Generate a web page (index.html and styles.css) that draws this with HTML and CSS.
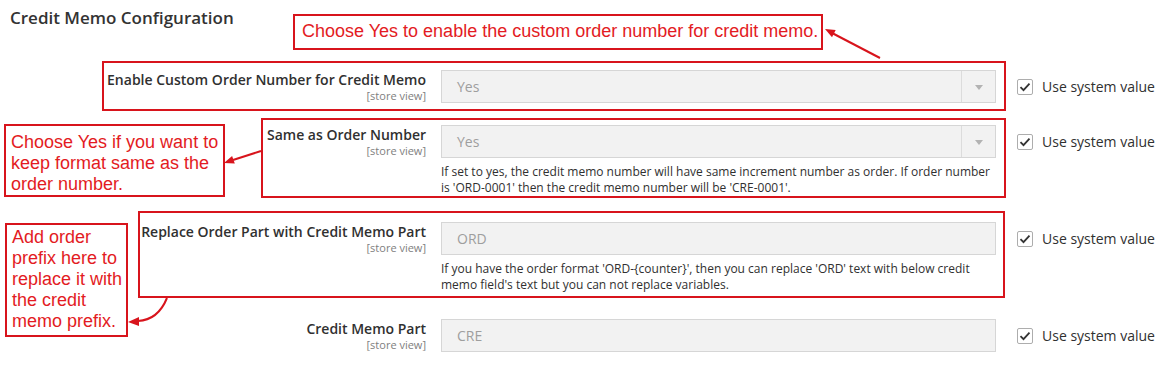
FILE: index.html
```html
<!DOCTYPE html>
<html lang="en">
<head>
    <meta charset="UTF-8">
    <meta name="viewport" content="width=device-width, initial-scale=1.0">
    <title>Credit Memo Configuration</title>
    <link rel="stylesheet" href="styles.css">
</head>
<body>
    <div class="page">
        <h2 class="title">Credit Memo Configuration</h2>

        <div class="form">
            <div class="row">
                <div class="label">
                    <span class="name">Enable Custom Order Number for Credit Memo</span>
                    <span class="scope">[store view]</span>
                </div>
                <div class="value">
                    <div class="field select"><span>Yes</span><span class="caret"></span></div>
                </div>
                <label class="inherit">
                    <span class="check"><svg viewBox="0 0 16 16" width="16" height="16"><path d="M3.5 8.2l3 3 6-6.5" fill="none" stroke="#333" stroke-width="1.8"/></svg></span>
                    Use system value
                </label>
            </div>

            <div class="row">
                <div class="label">
                    <span class="name">Same as Order Number</span>
                    <span class="scope">[store view]</span>
                </div>
                <div class="value">
                    <div class="field select"><span>Yes</span><span class="caret"></span></div>
                    <p class="note">If set to yes, the credit memo number will have same increment number as order. If order number is 'ORD-0001' then the credit memo number will be 'CRE-0001'.</p>
                </div>
                <label class="inherit">
                    <span class="check"><svg viewBox="0 0 16 16" width="16" height="16"><path d="M3.5 8.2l3 3 6-6.5" fill="none" stroke="#333" stroke-width="1.8"/></svg></span>
                    Use system value
                </label>
            </div>

            <div class="row">
                <div class="label">
                    <span class="name">Replace Order Part with Credit Memo Part</span>
                    <span class="scope">[store view]</span>
                </div>
                <div class="value">
                    <div class="field"><span>ORD</span></div>
                    <p class="note">If you have the order format 'ORD-{counter}', then you can replace 'ORD' text with below credit memo field's text but you can not replace variables.</p>
                </div>
                <label class="inherit">
                    <span class="check"><svg viewBox="0 0 16 16" width="16" height="16"><path d="M3.5 8.2l3 3 6-6.5" fill="none" stroke="#333" stroke-width="1.8"/></svg></span>
                    Use system value
                </label>
            </div>

            <div class="row">
                <div class="label">
                    <span class="name">Credit Memo Part</span>
                    <span class="scope">[store view]</span>
                </div>
                <div class="value">
                    <div class="field"><span>CRE</span></div>
                </div>
                <label class="inherit">
                    <span class="check"><svg viewBox="0 0 16 16" width="16" height="16"><path d="M3.5 8.2l3 3 6-6.5" fill="none" stroke="#333" stroke-width="1.8"/></svg></span>
                    Use system value
                </label>
            </div>
        </div>

        <!-- annotation layer drawn over the form -->
        <div class="marks">
            <div class="mark mark-row1"></div>
            <div class="mark mark-row2"></div>
            <div class="mark mark-row3"></div>
            <div class="mark callout callout-1">Choose Yes to enable the custom order number for credit memo.</div>
            <div class="mark callout callout-2">Choose Yes if you want to keep format same as the order number.</div>
            <div class="mark callout callout-3">Add order prefix here to replace it with the credit memo prefix.</div>
            <svg class="arrows" width="1167" height="379" viewBox="0 0 1167 379">
                <g stroke="#d8141c" stroke-width="2" fill="none">
                    <line x1="880" y1="58" x2="833" y2="33.5"/>
                    <line x1="261" y1="151" x2="233" y2="160"/>
                    <path d="M167 298 Q158 320 138 321"/>
                </g>
                <g fill="#d8141c">
                    <polygon points="825,29 835.7,30.1 832,37.2"/>
                    <polygon points="224,163 234.8,163.5 232.1,155.9"/>
                    <polygon points="128,322 139,317 139,326"/>
                </g>
            </svg>
        </div>
    </div>
</body>
</html>
```

FILE: styles.css
```css
body {
    margin: 0;
    font-family: "Open Sans", sans-serif;
    color: #303030;
    background: #fff;
}
.page {
    position: relative;
    width: 1167px;
    height: 379px;
    overflow: hidden;
}
.title {
    margin: 0;
    padding: 7px 0 0 10px;
    font-size: 17px;
    font-weight: 600;
    line-height: 22px;
    color: #333;
}
.form {
    margin-top: 41px;
}
.row {
    display: grid;
    grid-template-columns: 426px 555px auto;
    column-gap: 15px;
    margin-bottom: 22px;
}
.label {
    text-align: right;
    padding-top: 1px;
}
.label .name {
    display: block;
    font-size: 14px;
    font-weight: 600;
    line-height: 18px;
}
.label .scope {
    display: block;
    font-size: 11px;
    line-height: 14px;
    color: #808080;
}
.field {
    display: flex;
    align-items: center;
    height: 33px;
    box-sizing: border-box;
    border: 1px solid #d6d6d6;
    background: #f2f2f2;
    padding-left: 15px;
    font-size: 14px;
    color: #9e9e9e;
}
.field span:first-child {
    flex: 1;
}
.select .caret {
    align-self: stretch;
    width: 33px;
    border-left: 1px solid #dcdcdc;
    position: relative;
}
.select .caret::after {
    content: "";
    position: absolute;
    left: 13px;
    top: 14px;
    border-left: 4px solid transparent;
    border-right: 4px solid transparent;
    border-top: 5px solid #b3b3b3;
}
.note {
    margin: 6px 0 0;
    padding-bottom: 4px;
    font-size: 12px;
    line-height: 16px;
    color: #303030;
}
.inherit {
    display: flex;
    align-items: center;
    align-self: start;
    height: 33px;
    margin-left: 6px;
    gap: 9px;
    font-size: 14px;
    color: #303030;
    white-space: nowrap;
}
.check {
    display: block;
    width: 16px;
    height: 16px;
    box-sizing: border-box;
    border: 1px solid #adadad;
    border-radius: 2px;
    background: #fff;
}
.check svg {
    display: block;
    margin: -1px;
}

/* annotations */
.marks {
    position: absolute;
    inset: 0;
    pointer-events: none;
}
.mark {
    position: absolute;
    box-sizing: border-box;
    border: 2px solid #d8141c;
}
.mark-row1 {
    left: 102px;
    top: 61px;
    width: 904px;
    height: 50px;
}
.mark-row2 {
    left: 261px;
    top: 118px;
    width: 745px;
    height: 80px;
}
.mark-row3 {
    left: 138px;
    top: 211px;
    width: 867px;
    height: 87px;
}
.callout {
    font-family: "Liberation Sans", Arial, sans-serif;
    font-size: 18px;
    line-height: 21px;
    color: #e31b23;
    background: #fff;
}
.callout-1 {
    left: 293px;
    top: 14px;
    width: 530px;
    height: 36px;
    padding: 5px 0 0 7px;
}
.callout-2 {
    left: 4px;
    top: 124px;
    width: 221px;
    height: 73px;
    padding: 6px 0 0 5px;
}
.callout-3 {
    left: 5px;
    top: 223px;
    width: 123px;
    height: 114px;
    padding: 2px 0 0 5px;
}
.arrows {
    position: absolute;
    left: 0;
    top: 0;
}
```
